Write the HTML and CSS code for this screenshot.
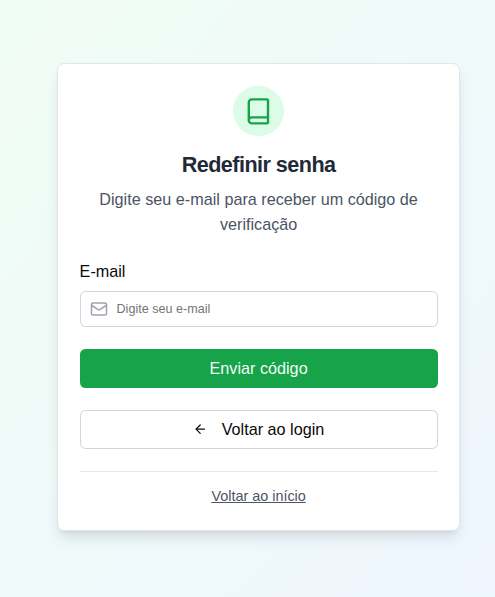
FILE: index.html
```html
<!DOCTYPE html>
<html lang="pt-BR">
<head>
<meta charset="utf-8">
<title>Redefinir senha</title>
<link rel="stylesheet" href="styles.css">
</head>
<body>
<main class="card">
  <header class="header">
    <div class="badge">
      <svg class="book" viewBox="0 0 24 24"><path d="M4 19.5v-15A2.5 2.5 0 0 1 6.5 2H19a1 1 0 0 1 1 1v18a1 1 0 0 1-1 1H6.5a1 1 0 0 1 0-5H20"/></svg>
    </div>
    <h1 class="title">Redefinir senha</h1>
    <p class="description">Digite seu e-mail para receber um código de verificação</p>
  </header>
  <form class="form">
    <label class="label" for="email">E-mail</label>
    <div class="field">
      <svg class="mail" viewBox="0 0 24 24"><rect width="20" height="16" x="2" y="4" rx="2"/><path d="m22 7-8.97 5.7a1.94 1.94 0 0 1-2.06 0L2 7"/></svg>
      <input class="input" id="email" type="email" placeholder="Digite seu e-mail">
    </div>
    <button class="button primary" type="button">Enviar código</button>
    <button class="button outline" type="button">
      <svg class="arrow" viewBox="0 0 24 24"><path d="m12 19-7-7 7-7M19 12H5"/></svg>
      Voltar ao login
    </button>
  </form>
  <footer class="footer"><a class="link" href="#">Voltar ao início</a></footer>
</main>
</body>
</html>
```
FILE: styles.css
```css
* { box-sizing: border-box; }

body {
  margin: 0;
  min-height: 100vh;
  padding: 63px 0 0 57px;
  display: flex;
  align-items: flex-start;
  background: linear-gradient(to bottom right, #f0fdf4, #eff6ff);
  font: 16.2px/25.2px "Liberation Sans", Arial, sans-serif;
  color: #0a0a0a;
}

svg {
  fill: none;
  stroke: currentColor;
  stroke-width: 2;
  stroke-linecap: round;
  stroke-linejoin: round;
  flex: none;
}

.card {
  width: 403px;
  height: 468px;
  padding: 22px 21.4px 21px 21.6px;
  border: 1px solid #e2e5e9;
  border-radius: 7.2px;
  background: #fff;
  box-shadow: 0 9px 13.5px -2.7px rgba(0, 0, 0, .1), 0 3.6px 5.4px -3.6px rgba(0, 0, 0, .1);
}

.header {
  display: flex;
  flex-direction: column;
  align-items: center;
  text-align: center;
}

.badge {
  width: 50.4px;
  height: 50.4px;
  display: grid;
  place-items: center;
  border-radius: 50%;
  background: #dcfce7;
  color: #16a34a;
}

.book { width: 28.8px; height: 28.8px; }

.title {
  margin: 14.4px 0 0;
  font-size: 21.6px;
  line-height: 28.8px;
  letter-spacing: -.54px;
  color: #1f2937;
}

.description {
  margin: 7.2px 0 0;
  color: #4b5563;
}

.form {
  margin-top: 21.6px;
  display: flex;
  flex-direction: column;
}

.label { color: #0a0a0a; }

.field {
  height: 36px;
  margin: 7.2px 0 21.6px;
  padding-left: 9.8px;
  display: flex;
  align-items: center;
  gap: 8.1px;
  border: 1px solid #d1d5db;
  border-radius: 5.4px;
}

.mail { width: 18px; height: 18px; color: #9ca3af; }

.input {
  flex: 1;
  min-width: 0;
  padding: 0;
  border: 0;
  outline: 0;
  background: none;
  font: 12.6px/18px "Liberation Sans", Arial, sans-serif;
}

.input::placeholder { color: #757575; }

.button {
  height: 39px;
  display: flex;
  align-items: center;
  justify-content: center;
  border: 0;
  border-radius: 5.4px;
  font: inherit;
}

.primary { background: #16a34a; color: #f0fdf4; }

.outline {
  margin-top: 22px;
  gap: 14.4px;
  border: 1px solid #d1d5db;
  background: #fff;
  color: #0a0a0a;
}

.arrow { width: 14.4px; height: 14.4px; }

.footer {
  margin-top: 22px;
  padding-top: 13px;
  border-top: 1px solid #e5e7eb;
  text-align: center;
  line-height: 21.6px;
}

.link {
  font-size: 14.4px;
  color: #4b5563;
  text-decoration: underline;
}
```
